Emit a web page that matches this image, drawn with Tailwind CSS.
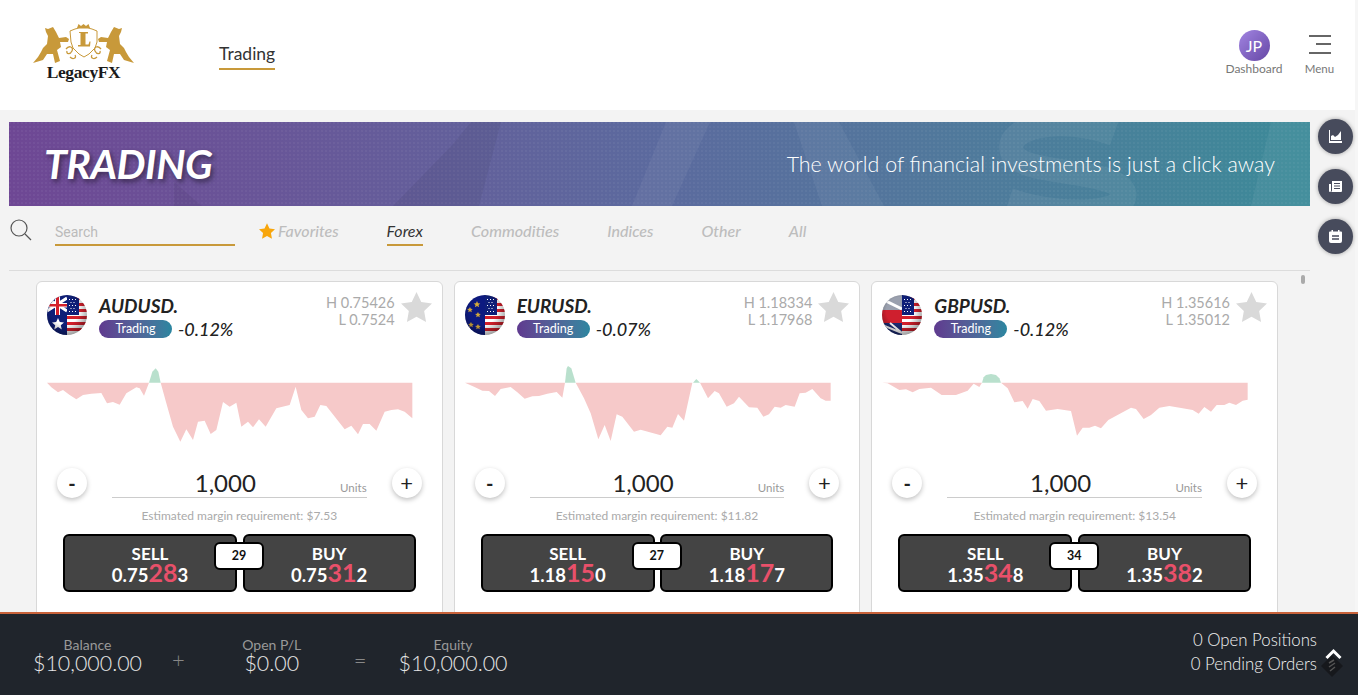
<!doctype html>
<html lang="en">
<head>
<meta charset="utf-8">
<title>LegacyFX Trading</title>
<script src="https://cdn.jsdelivr.net/npm/@tailwindcss/browser@4"></script>
</head>
<body class="relative h-[695px] w-[1358px] overflow-hidden bg-[#f3f3f3] font-['Lato','Liberation_Sans',sans-serif] text-[#222]">
<svg width="0" height="0" class="absolute">
  <defs>
    <clipPath id="c"><circle cx="20" cy="20" r="20"/></clipPath>
    <radialGradient id="shade" cx="45%" cy="40%" r="62%"><stop offset="55%" stop-color="#000" stop-opacity="0"/><stop offset="100%" stop-color="#000" stop-opacity=".4"/></radialGradient>
    <pattern id="dots" width="4" height="4" patternUnits="userSpaceOnUse"><rect width="2" height="2" fill="#fff" opacity=".045"/></pattern>
    <g id="us">
      <rect x="20" width="20" height="40" fill="#fff"/>
      <path d="M20 2h20v3H20zM20 8h20v3H20zM20 14h20v3H20zM20 21h20v3H20zM20 27h20v3H20zM20 33h20v3H20z" fill="#d4202c"/>
      <rect x="20" width="12" height="20" fill="#0f1f78"/>
      <path d="M22 4h1v1h-1zM25 4h1v1h-1zM28 4h1v1h-1zM23.500 7h1v1h-1zM26.500 7h1v1h-1zM22 10h1v1h-1zM25 10h1v1h-1zM28 10h1v1h-1zM23.500 13h1v1h-1zM26.500 13h1v1h-1zM22 16h1v1h-1zM25 16h1v1h-1zM28 16h1v1h-1z" fill="#fff"/>
    </g>
    <path id="star" d="M16 0l4.900 10.400 11.100 1.500-8.100 7.800 2 11.300-9.900-5.500-9.900 5.500 2-11.300L0 11.900l11.100-1.500z"/>
    <path id="horse" d="M12 4L15 5 20 3 23 8 26 14 33 13 36 15 35 18 27 18 28 23 24 26 27 37 22 39 20 30 14 30 10 36 0 39 5 33 8 28 10 24 14 20 15 12 13 8Z"/>
  </defs>
</svg>

<header class="flex h-[110px] items-start bg-white">
  <div class="ml-[33px] mt-[24px] w-[101px]">
    <svg width="101" height="40" viewBox="0 0 101 40" fill="#c8993a" class="block">
      <use href="#horse"/>
      <use href="#horse" transform="translate(101 0) scale(-1 1)"/>
      <path d="M37 7l5-2 4-1h9l4 1 5 2 0 11-2 6-6 6-5 3-5-3-6-6-2-6z" fill="#fff" stroke="#c8993a" stroke-width="1"/>
      <path d="M44 4l1.500-4 2.500 2 2.500-2 2.500 2 2.500-2 1.500 4z"/>
      <path d="M46 8h9v1.500h-2.500v11h3l1-3h1l-.5 5H45v-1.500h2.500v-12H46z"/>
      <path d="M33 25c3-4 8-2 6 2s-6 3-5 0M68 25c-3-4-8-2-6 2s6 3 5 0M37 33c3 3 7 1 5-2M64 33c-3 3-7 1-5-2" fill="none" stroke="#c8993a" stroke-width="1.300"/>
    </svg>
    <div class="mt-0 text-center font-['Liberation_Serif',serif] text-[17.500px] font-bold leading-[17px] tracking-[-0.4px] text-[#1a1a1a]">LegacyFX</div>
  </div>
  <nav class="ml-[85px] mt-[42px] border-b-2 border-[#c8993a] pb-[3px] text-[17.500px] leading-[23px] text-[#333]">Trading</nav>
  <div class="ml-auto mr-[23px] mt-[30px] flex">
    <div class="flex w-[58px] flex-col items-center">
      <div class="flex h-[31px] w-[31px] items-center justify-center rounded-full bg-gradient-to-br from-[#a285e2] to-[#6647a5] text-[16px] text-white">JP</div>
      <div class="mt-[1px] whitespace-nowrap text-[12px] leading-[14px] text-[#777]">Dashboard</div>
    </div>
    <div class="ml-[21px] flex w-[31px] flex-col items-center">
      <svg width="22" height="31" viewBox="0 0 22 31" class="block" stroke="#666" stroke-width="2"><path d="M0 6h22M7 14h15M0 23h22"/></svg>
      <div class="mt-[1px] text-[11.500px] leading-[14px] text-[#777]">Menu</div>
    </div>
  </div>
</header>

<main class="h-[502px] overflow-hidden pl-[9px] pt-[12px]">
  <section class="relative flex h-[84px] w-[1301px] items-center justify-between overflow-hidden bg-gradient-to-r from-[#6e4794] via-[#5b6a9e] to-[#3b8a98] pl-[35px] pr-[35px] text-white">
    <svg class="absolute left-0 top-0" width="1301" height="84" viewBox="0 0 1301 84">
      <rect width="1301" height="84" fill="url(#dots)"/>
      <path d="M384 84l60-62 18-22h30l-22 84z" fill="#000" opacity=".05"/>
      <path d="M165 60l28 24h-28z" fill="#000" opacity=".05"/>
      <path d="M623 84l34-84h44l-38 84zM785 0h45l45 84h-62z" fill="#fff" opacity=".05"/>
      <path d="M1105 12C1050-8 995 5 1003 30c8 25 102 15 112 40 7 20-55 28-115 8" fill="none" stroke="#fff" stroke-width="24" opacity=".06"/>
      <path d="M1242 84l20-84h39v84z" fill="#fff" opacity=".05"/>
    </svg>
    <h1 class="relative text-[41px] font-bold italic leading-[46px] tracking-[-0.5px] [text-shadow:2px_3px_5px_rgba(0,0,0,.45)]">TRADING</h1>
    <p class="relative text-[21.400px] font-light leading-[28px] text-white">The world of financial investments is just a click away</p>
  </section>

  <div class="flex h-[65px] w-[1301px] items-start border-b border-[#dcdcdc] pt-[13px]">
    <svg width="22" height="22" viewBox="0 0 22 22" fill="none" stroke="#555" class="ml-[1px] block"><circle cx="9" cy="9" r="8" stroke-width="1.200"/><path d="M15 15l6 6" stroke-width="1.200"/></svg>
    <div class="ml-[23px] mt-[4px] h-[23px] w-[180px] border-b-2 border-[#c8993a] font-['Roboto',sans-serif] text-[14px] leading-[18px] text-[#bbb]">Search</div>
    <div class="ml-[24px] mt-[2px] flex items-center text-[16px] font-medium italic leading-[19px] text-[#bdbdbd]">
      <svg width="16" height="16" viewBox="0 0 32 31" fill="#f8a60c" class="mr-[3px] block"><use href="#star"/></svg>Favorites
    </div>
    <div class="ml-[48px] mt-[2px] border-b-2 border-[#c8993a] pb-[4px] text-[16px] italic leading-[19px] text-[#333]">Forex</div>
    <div class="ml-[48px] mt-[2px] text-[16.200px] font-medium italic leading-[19px] text-[#bdbdbd]">Commodities</div>
    <div class="ml-[48px] mt-[2px] text-[16px] font-medium italic leading-[19px] text-[#bdbdbd]">Indices</div>
    <div class="ml-[48px] mt-[2px] text-[16px] font-medium italic leading-[19px] text-[#bdbdbd]">Other</div>
    <div class="ml-[48px] mt-[2px] text-[16px] font-medium italic leading-[19px] text-[#bdbdbd]">All</div>
  </div>

  <div class="relative ml-[27px] mt-[10px] grid w-[1242px] grid-cols-3 gap-[11px]">
    <!-- AUDUSD -->
    <article class="h-[400px] rounded-[6px] border border-[#d8d8d8] bg-white">
      <div class="flex pl-[10px] pr-[10px] pt-[13px]">
        <svg width="40" height="40" viewBox="0 0 40 40" class="block shrink-0"><g clip-path="url(#c)"><rect width="20" height="40" fill="#0f1f78"/><path d="M0 3l20 13M0 16L20 3" stroke="#fff" stroke-width="3"/><path d="M8 0h5v20H8zM0 8h20v4.500H0z" fill="#fff"/><path d="M9 0h3v20H9zM0 9h20v2.500H0z" fill="#d4202c"/><path d="M11 23l1.800 4 4.200.4-3.200 2.800 1 4.200-3.800-2.300-3.800 2.300 1-4.200L5 27.400l4.200-.4z" fill="#fff"/><use href="#us"/><rect width="40" height="40" fill="url(#shade)"/></g></svg>
        <div class="ml-[12px]">
          <div class="text-[19px] font-bold italic leading-[22px] text-[#222]">AUDUSD.</div>
          <div class="mt-[2px] flex items-center"><span class="flex h-[18px] w-[73px] items-center justify-center rounded-full bg-gradient-to-r from-[#5f3a8f] to-[#2a86a0] text-[12.500px] text-white">Trading</span><span class="ml-[6px] text-[18px] font-medium italic leading-[20px] text-[#222]">-0.12%</span></div>
        </div>
        <div class="ml-auto mr-[6px] mt-[-1px] text-right text-[14.500px] leading-[17px] text-[#aaa]"><div>H 0.75426</div><div>L 0.7524</div></div>
        <svg width="31" height="30" viewBox="0 0 32 31" fill="#d9d9d9" class="mt-[-3px] block"><use href="#star"/></svg>
      </div>
      <svg width="366" height="90" viewBox="52 240 1098 270" class="ml-[10px] mt-[21px] block blur-[0.4px]"><polygon fill="#f6c9c9" points="52,308 65,322 85,337 100,330 120,345 140,358 160,345 185,341 215,339 232,370 250,366 270,374 290,340 320,322 330,325 343,347 358,308 393,308 410,370 430,440 452,485 470,448 490,480 505,425 525,422 543,462 560,450 580,366 600,380 620,368 635,440 655,425 670,442 688,418 708,440 740,385 780,375 798,320 815,390 835,415 855,410 872,375 890,378 945,448 965,437 985,463 1000,432 1020,432 1040,452 1065,395 1085,390 1105,388 1125,395 1148,415 1148,308"/><polygon fill="#b9e0cd" points="358,308 368,275 378,265 386,275 393,308"/></svg>
      <div class="flex items-center px-[20px] pt-[18px]">
        <div class="flex h-[30px] w-[30px] shrink-0 items-center justify-center rounded-full bg-white text-[20px] font-bold leading-none shadow-[0_2px_5px_rgba(0,0,0,.25)]">-</div>
        <div class="relative mx-[25px] h-[30px] flex-1 border-b border-[#ccc] pr-[28px] text-center text-[24px] leading-[30px]">1,000<span class="absolute bottom-[2px] right-0 text-[11.500px] leading-[14px] text-[#999]">Units</span></div>
        <div class="flex h-[30px] w-[30px] shrink-0 items-center justify-center rounded-full bg-white text-[22px] leading-none shadow-[0_2px_5px_rgba(0,0,0,.25)]">+</div>
      </div>
      <div class="mt-[11px] text-center text-[12px] leading-[14px] text-[#aaa]">Estimated margin requirement: $7.53</div>
      <div class="relative mx-[26px] mt-[11px] flex justify-between text-white">
        <div class="flex h-[58px] w-[174px] flex-col items-center justify-center rounded-[6px] border-2 border-black bg-[#444] pt-[4px] font-bold"><div class="text-[17px] leading-[17px]">SELL</div><div class="text-[18.500px] leading-[22px]">0.75<span class="text-[25px] leading-[20px] text-[#e8506a]">28</span>3</div></div>
        <div class="flex h-[58px] w-[173px] flex-col items-center justify-center rounded-[6px] border-2 border-black bg-[#444] pt-[4px] font-bold"><div class="text-[17px] leading-[17px]">BUY</div><div class="text-[18.500px] leading-[22px]">0.75<span class="text-[25px] leading-[20px] text-[#e8506a]">31</span>2</div></div>
        <div class="absolute left-[151px] top-[8px] flex h-[28px] w-[50px] items-center justify-center rounded-[6px] border-2 border-black bg-white text-[12.500px] font-bold text-[#111]">29</div>
      </div>
    </article>
    <!-- EURUSD -->
    <article class="h-[400px] rounded-[6px] border border-[#d8d8d8] bg-white">
      <div class="flex pl-[10px] pr-[10px] pt-[13px]">
        <svg width="40" height="40" viewBox="0 0 40 40" class="block shrink-0"><g clip-path="url(#c)"><rect width="20" height="40" fill="#0d1a80"/><path d="M12 6l1 2.200 2.300.2-1.800 1.500.6 2.300-2.100-1.300-2.100 1.300.6-2.300-1.800-1.500 2.300-.2zM5 12l.8 1.800 2 .2-1.500 1.300.5 2-1.800-1-1.800 1 .5-2L2 14l2-.2zM13 17l.8 1.800 2 .2-1.500 1.300.5 2-1.800-1-1.800 1 .5-2L10 19l2-.2zM6 27l.8 1.800 2 .2-1.500 1.300.5 2-1.800-1-1.800 1 .5-2L3 29l2-.2zM13 29l.8 1.800 2 .2-1.500 1.300.5 2-1.800-1-1.800 1 .5-2L10 31l2-.2z" fill="#d3a93a"/><use href="#us"/><rect width="40" height="40" fill="url(#shade)"/></g></svg>
        <div class="ml-[12px]">
          <div class="text-[19px] font-bold italic leading-[22px] text-[#222]">EURUSD.</div>
          <div class="mt-[2px] flex items-center"><span class="flex h-[18px] w-[73px] items-center justify-center rounded-full bg-gradient-to-r from-[#5f3a8f] to-[#2a86a0] text-[12.500px] text-white">Trading</span><span class="ml-[6px] text-[18px] font-medium italic leading-[20px] text-[#222]">-0.07%</span></div>
        </div>
        <div class="ml-auto mr-[6px] mt-[-1px] text-right text-[14.500px] leading-[17px] text-[#aaa]"><div>H 1.18334</div><div>L 1.17968</div></div>
        <svg width="31" height="30" viewBox="0 0 32 31" fill="#d9d9d9" class="mt-[-3px] block"><use href="#star"/></svg>
      </div>
      <svg width="366" height="90" viewBox="43 225 1098 270" class="ml-[10px] mt-[21px] block blur-[0.4px]"><polygon fill="#f6c9c9" points="43,293 70,305 95,317 115,318 133,333 150,312 180,306 200,322 222,341 245,334 265,333 290,326 318,321 335,338 343,293 375,293 400,340 420,385 443,463 462,420 480,468 498,388 515,395 550,440 570,434 630,451 650,425 665,428 682,387 700,407 725,293 748,293 772,340 792,318 805,325 828,365 850,355 865,335 895,367 920,368 938,395 955,388 972,365 990,368 1005,360 1032,365 1047,325 1065,323 1085,312 1110,340 1125,347 1140,347 1140,293"/><polygon fill="#b9e0cd" points="343,293 348,250 352,243 362,250 375,293"/><polygon fill="#b9e0cd" points="727,293 737,282 748,293"/></svg>
      <div class="flex items-center px-[20px] pt-[18px]">
        <div class="flex h-[30px] w-[30px] shrink-0 items-center justify-center rounded-full bg-white text-[20px] font-bold leading-none shadow-[0_2px_5px_rgba(0,0,0,.25)]">-</div>
        <div class="relative mx-[25px] h-[30px] flex-1 border-b border-[#ccc] pr-[28px] text-center text-[24px] leading-[30px]">1,000<span class="absolute bottom-[2px] right-0 text-[11.500px] leading-[14px] text-[#999]">Units</span></div>
        <div class="flex h-[30px] w-[30px] shrink-0 items-center justify-center rounded-full bg-white text-[22px] leading-none shadow-[0_2px_5px_rgba(0,0,0,.25)]">+</div>
      </div>
      <div class="mt-[11px] text-center text-[12px] leading-[14px] text-[#aaa]">Estimated margin requirement: $11.82</div>
      <div class="relative mx-[26px] mt-[11px] flex justify-between text-white">
        <div class="flex h-[58px] w-[174px] flex-col items-center justify-center rounded-[6px] border-2 border-black bg-[#444] pt-[4px] font-bold"><div class="text-[17px] leading-[17px]">SELL</div><div class="text-[18.500px] leading-[22px]">1.18<span class="text-[25px] leading-[20px] text-[#e8506a]">15</span>0</div></div>
        <div class="flex h-[58px] w-[173px] flex-col items-center justify-center rounded-[6px] border-2 border-black bg-[#444] pt-[4px] font-bold"><div class="text-[17px] leading-[17px]">BUY</div><div class="text-[18.500px] leading-[22px]">1.18<span class="text-[25px] leading-[20px] text-[#e8506a]">17</span>7</div></div>
        <div class="absolute left-[151px] top-[8px] flex h-[28px] w-[50px] items-center justify-center rounded-[6px] border-2 border-black bg-white text-[12.500px] font-bold text-[#111]">27</div>
      </div>
    </article>
    <!-- GBPUSD -->
    <article class="h-[400px] rounded-[6px] border border-[#d8d8d8] bg-white">
      <div class="flex pl-[10px] pr-[10px] pt-[13px]">
        <svg width="40" height="40" viewBox="0 0 40 40" class="block shrink-0"><g clip-path="url(#c)"><rect width="20" height="40" fill="#eee"/><path d="M0 0h20v15H0z" fill="#9aa0ae"/><path d="M0 28h20v12H0z" fill="#1b2a70"/><path d="M0 15h20v13H0z" fill="#cf1f2e"/><path d="M0 30l20 8M8 28l12 10" stroke="#fff" stroke-width="2"/><path d="M0 4l20 10" stroke="#fff" stroke-width="3"/><use href="#us"/><rect width="40" height="40" fill="url(#shade)"/></g></svg>
        <div class="ml-[12px]">
          <div class="text-[19px] font-bold italic leading-[22px] text-[#222]">GBPUSD.</div>
          <div class="mt-[2px] flex items-center"><span class="flex h-[18px] w-[73px] items-center justify-center rounded-full bg-gradient-to-r from-[#5f3a8f] to-[#2a86a0] text-[12.500px] text-white">Trading</span><span class="ml-[6px] text-[18px] font-medium italic leading-[20px] text-[#222]">-0.12%</span></div>
        </div>
        <div class="ml-auto mr-[6px] mt-[-1px] text-right text-[14.500px] leading-[17px] text-[#aaa]"><div>H 1.35616</div><div>L 1.35012</div></div>
        <svg width="31" height="30" viewBox="0 0 32 31" fill="#d9d9d9" class="mt-[-3px] block"><use href="#star"/></svg>
      </div>
      <svg width="366" height="90" viewBox="43 225 1098 270" class="ml-[10px] mt-[21px] block blur-[0.4px]"><polygon fill="#f6c9c9" points="43,293 60,295 95,315 115,313 135,322 155,312 190,308 222,330 265,330 300,317 318,296 335,306 343,293 400,293 420,310 440,352 465,348 480,371 495,342 515,348 535,377 570,372 610,378 628,452 645,428 665,428 682,422 700,430 722,405 790,368 805,372 828,402 850,390 875,368 905,363 945,370 975,375 993,386 1010,366 1030,380 1047,360 1070,360 1085,353 1105,360 1125,347 1140,344 1140,293"/><polygon fill="#b9e0cd" points="343,293 348,277 355,270 370,267 385,270 395,280 400,293"/></svg>
      <div class="flex items-center px-[20px] pt-[18px]">
        <div class="flex h-[30px] w-[30px] shrink-0 items-center justify-center rounded-full bg-white text-[20px] font-bold leading-none shadow-[0_2px_5px_rgba(0,0,0,.25)]">-</div>
        <div class="relative mx-[25px] h-[30px] flex-1 border-b border-[#ccc] pr-[28px] text-center text-[24px] leading-[30px]">1,000<span class="absolute bottom-[2px] right-0 text-[11.500px] leading-[14px] text-[#999]">Units</span></div>
        <div class="flex h-[30px] w-[30px] shrink-0 items-center justify-center rounded-full bg-white text-[22px] leading-none shadow-[0_2px_5px_rgba(0,0,0,.25)]">+</div>
      </div>
      <div class="mt-[11px] text-center text-[12px] leading-[14px] text-[#aaa]">Estimated margin requirement: $13.54</div>
      <div class="relative mx-[26px] mt-[11px] flex justify-between text-white">
        <div class="flex h-[58px] w-[174px] flex-col items-center justify-center rounded-[6px] border-2 border-black bg-[#444] pt-[4px] font-bold"><div class="text-[17px] leading-[17px]">SELL</div><div class="text-[18.500px] leading-[22px]">1.35<span class="text-[25px] leading-[20px] text-[#e8506a]">34</span>8</div></div>
        <div class="flex h-[58px] w-[173px] flex-col items-center justify-center rounded-[6px] border-2 border-black bg-[#444] pt-[4px] font-bold"><div class="text-[17px] leading-[17px]">BUY</div><div class="text-[18.500px] leading-[22px]">1.35<span class="text-[25px] leading-[20px] text-[#e8506a]">38</span>2</div></div>
        <div class="absolute left-[151px] top-[8px] flex h-[28px] w-[50px] items-center justify-center rounded-[6px] border-2 border-black bg-white text-[12.500px] font-bold text-[#111]">34</div>
      </div>
    </article>
  </div>
</main>

<footer class="relative flex h-[83px] items-start border-t-2 border-[#c8623a] bg-[#20252c] text-[#e6e6e6]">
  <div class="ml-[33px] mt-[23px] w-[109px] text-center"><div class="text-[14px] leading-[15px] text-[#999]">Balance</div><div class="text-[21.400px] font-light leading-[22px]">$10,000.00</div></div>
  <div class="ml-[30px] mt-[33px] text-[22px] font-light leading-[26px] text-[#888]">+</div>
  <div class="ml-[52px] mt-[23px] w-[70px] text-center"><div class="text-[14px] leading-[15px] text-[#999]">Open P/L</div><div class="text-[21.400px] font-light leading-[22px]">$0.00</div></div>
  <div class="ml-[47px] mt-[33px] text-[22px] font-light leading-[26px] text-[#888]">=</div>
  <div class="ml-[32px] mt-[23px] w-[109px] text-center"><div class="text-[14px] leading-[15px] text-[#999]">Equity</div><div class="text-[21.400px] font-light leading-[22px]">$10,000.00</div></div>
  <div class="ml-auto mr-[41px] mt-[14px] text-right text-[16.800px] font-light leading-[24px] text-[#f2f2f2]"><div>0 Open Positions</div><div>0 Pending Orders</div></div>
</footer>

<div class="absolute right-0 top-0 h-[612px] w-[3px] bg-[#f6f6f6]"></div>
<aside class="absolute left-[1318px] top-[119px] flex flex-col gap-[15px]">
  <button class="flex h-[35px] w-[35px] items-center justify-center rounded-full bg-[#474b5c] shadow-[0_0_4px_rgba(0,0,0,.35)]"><svg width="13" height="13" viewBox="0 0 13 13" fill="#fff" class="block"><path d="M0 0h1v11h12v2H0zM2 10V6l2-1 2 2 3-2 3-4v9z"/></svg></button>
  <button class="flex h-[35px] w-[35px] items-center justify-center rounded-full bg-[#474b5c] shadow-[0_0_4px_rgba(0,0,0,.35)]"><svg width="13" height="13" viewBox="0 0 13 13" class="block"><path d="M3 1h10v10a1 1 0 0 1-1 1H2a2 2 0 0 0 1-2zM0 4h2v7a1 1 0 0 1-2 0z" fill="#fff"/><path d="M5 3.500h6M5 6h6M5 8.500h6" stroke="#474b5c"/></svg></button>
  <button class="flex h-[35px] w-[35px] items-center justify-center rounded-full bg-[#474b5c] shadow-[0_0_4px_rgba(0,0,0,.35)]"><svg width="13" height="13" viewBox="0 0 13 13" class="block"><path d="M2.500 0h1.500v1.500h5V0h1.500v1.500H12a1 1 0 0 1 1 1V11a2 2 0 0 1-2 2H2a2 2 0 0 1-2-2V2.500a1 1 0 0 1 1-1h1.500z" fill="#fff"/><path d="M3 6h7M3 9h7" stroke="#474b5c" stroke-width="1.300"/></svg></button>
</aside>
<div class="absolute left-[1301px] top-[275px] h-[9px] w-[4px] rounded-full bg-[#aaa]"></div>
<svg class="absolute left-[1320px] top-[654px]" width="24" height="24" viewBox="0 0 24 24"><path d="M12 1l11 11-11 11L1 12z" fill="#16181c"/><path d="M9 9l5-3M9 13l6-4M10 17l5-4" stroke="#555" stroke-width="1.500"/></svg>
<svg class="absolute left-[1325px] top-[648px]" width="17" height="12" viewBox="0 0 17 12" fill="none" stroke="#fff" stroke-width="3"><path d="M1.500 10l7-7 7 7"/></svg>
</body>
</html>
